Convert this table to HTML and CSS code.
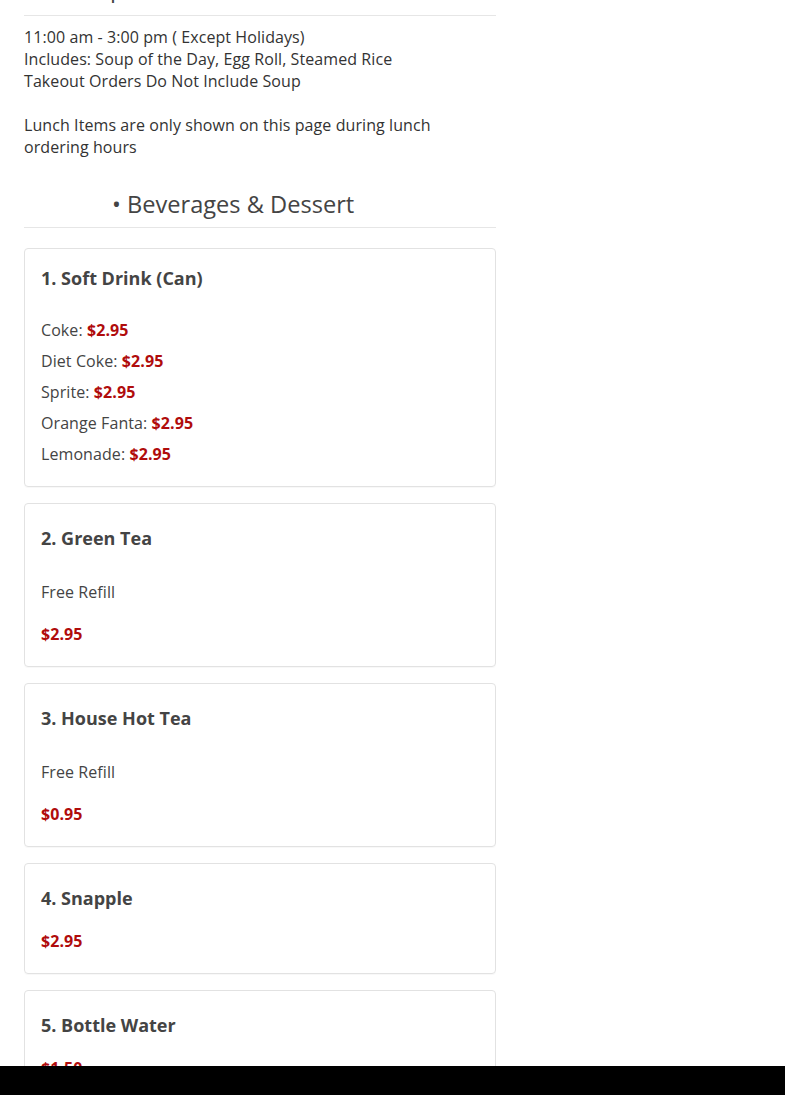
FILE: index.html
```html
<!DOCTYPE html>
<html>
<head>
<meta charset="utf-8">
<link rel="stylesheet" href="styles.css">
</head>
<body>
<div class="page">
  <h2 class="cat cat-top">Lunch Special</h2>
  <p class="intro">11:00 am - 3:00 pm ( Except Holidays)<br>Includes: Soup of the Day, Egg Roll, Steamed Rice<br>Takeout Orders Do Not Include Soup<br><br>Lunch Items are only shown on this page during lunch ordering hours</p>

  <h2 class="cat cat-bev">• Beverages &amp; Dessert</h2>

  <div class="cards">
    <div class="card card-first">
      <h3 class="title">1. Soft Drink (Can)</h3>
      <ul class="opts">
        <li>Coke: <span class="price">$2.95</span></li>
        <li>Diet Coke: <span class="price">$2.95</span></li>
        <li>Sprite: <span class="price">$2.95</span></li>
        <li>Orange Fanta: <span class="price">$2.95</span></li>
        <li>Lemonade: <span class="price">$2.95</span></li>
      </ul>
    </div>
    <div class="card">
      <h3 class="title">2. Green Tea</h3>
      <p class="desc">Free Refill</p>
      <p class="price">$2.95</p>
    </div>
    <div class="card">
      <h3 class="title">3. House Hot Tea</h3>
      <p class="desc">Free Refill</p>
      <p class="price">$0.95</p>
    </div>
    <div class="card">
      <h3 class="title">4. Snapple</h3>
      <p class="price">$2.95</p>
    </div>
    <div class="card">
      <h3 class="title">5. Bottle Water</h3>
      <p class="price">$1.50</p>
    </div>
  </div>
</div>
<div class="bottom-bar"></div>
</body>
</html>
```
FILE: styles.css
```css
html, body {
  margin: 0;
  padding: 0;
  background: #fff;
}
body {
  font-family: "Open Sans", "Liberation Sans", sans-serif;
  font-size: 16px;
  letter-spacing: 0.08px;
  color: #333;
}
.page {
  width: 472px;
  padding: 0 24px 80px;
}
.cat {
  margin: 0;
  font-weight: 400;
  font-size: 23.6px;
  letter-spacing: 0;
  line-height: 32px;
  color: #444;
  padding-bottom: 7px;
  border-bottom: 1px solid #e6e6e6;
}
.cat-top {
  margin-top: -28px;
  padding-bottom: 11px;
}
.cat-bev {
  margin-top: 30px;
  padding-left: 88px;
}
.intro {
  margin: 10px 0 0;
  line-height: 22px;
  width: 420px;
}
.cards {
  display: flex;
  flex-direction: column;
  gap: 16px;
  margin-top: 20px;
}
.card {
  border: 1px solid #e2e2e2;
  border-radius: 4px;
  padding: 19px 16px 21px;
  box-shadow: 0 1px 1px rgba(0,0,0,0.03);
}
.card-first {
  padding-top: 14px;
}
.title {
  margin: 0;
  font-size: 18px;
  letter-spacing: 0;
  font-weight: 700;
  line-height: 30px;
  color: #444;
}
.desc {
  margin: 28px 0 20px;
  line-height: 22px;
  color: #444;
}
.price {
  margin: 0;
  line-height: 22px;
  font-weight: 700;
  color: #b00c0c;
}
.title + .price {
  margin-top: 17px;
}
.opts {
  list-style: none;
  margin: 26px 0 0;
  padding: 0;
  display: flex;
  flex-direction: column;
  gap: 9px;
}
.opts li {
  line-height: 22px;
  color: #444;
}
.bottom-bar {
  position: fixed;
  left: 0;
  right: 0;
  bottom: 0;
  height: 29px;
  background: #000;
}
```
